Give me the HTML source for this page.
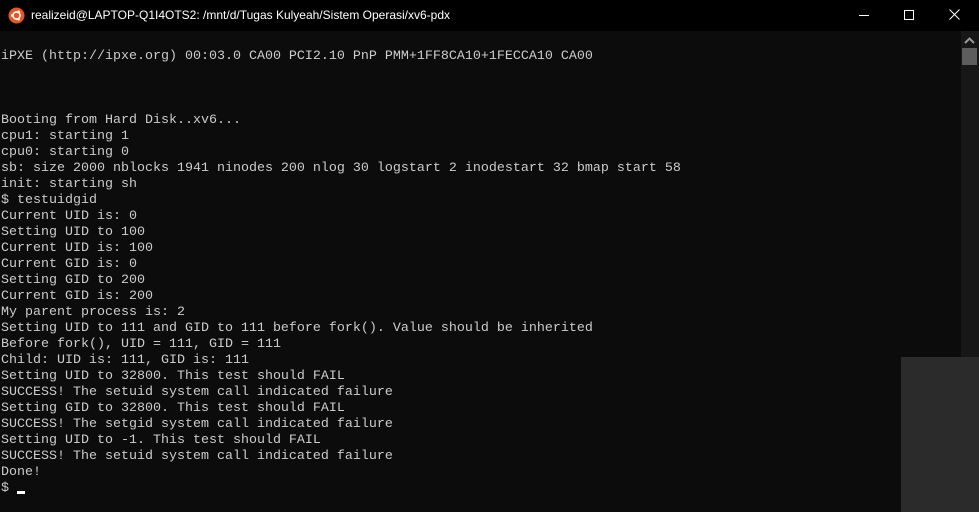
<!DOCTYPE html>
<html><head><style>
body{margin:0;width:979px;height:512px;background:#0c0c0c;overflow:hidden;position:relative}
#tb{position:absolute;left:0;top:0;width:979px;height:31px;background:#000}
#title{position:absolute;left:31px;top:8px;color:#fff;font:12px "Liberation Sans",sans-serif;white-space:nowrap}
#term{position:absolute;left:1px;top:33px;margin:0;color:#cccccc;font:13.33px/16px "Liberation Mono",monospace;white-space:pre}
#sb{position:absolute;left:961px;top:31px;width:18px;height:481px;background:#171717}
#thumb{position:absolute;left:962px;top:48px;width:15px;height:17px;background:#5d5d5d}
#gb{position:absolute;left:901px;top:357px;width:78px;height:155px;background:#2b2b2b}
#cur{position:absolute;left:17px;top:491px;width:8px;height:3px;background:#fff}
</style></head><body>
<div id="tb">
<svg style="position:absolute;left:8px;top:7px" width="17" height="17" viewBox="0 0 17 17"><circle cx="8.5" cy="8.5" r="8" fill="#e95420"/><circle cx="8.5" cy="8.5" r="3.6" fill="none" stroke="#fff" stroke-width="1.6"/><circle cx="4.3" cy="8.5" r="1.4" fill="#fff"/><circle cx="10.6" cy="4.9" r="1.4" fill="#fff"/><circle cx="10.6" cy="12.1" r="1.4" fill="#fff"/></svg>
<div id="title">realizeid@LAPTOP-Q1I4OTS2: /mnt/d/Tugas Kulyeah/Sistem Operasi/xv6-pdx</div>
<div style="position:absolute;left:859px;top:15px;width:10px;height:1px;background:#fff"></div>
<div style="position:absolute;left:904px;top:10px;width:8px;height:8px;border:1px solid #fff"></div>
<svg style="position:absolute;left:949px;top:9px" width="11" height="11"><path d="M0.5 0.5L10.5 10.5M10.5 0.5L0.5 10.5" stroke="#fff" stroke-width="1"/></svg>
</div>
<pre id="term">

iPXE (http://ipxe.org) 00:03.0 CA00 PCI2.10 PnP PMM+1FF8CA10+1FECCA10 CA00



Booting from Hard Disk..xv6...
cpu1: starting 1
cpu0: starting 0
sb: size 2000 nblocks 1941 ninodes 200 nlog 30 logstart 2 inodestart 32 bmap start 58
init: starting sh
$ testuidgid
Current UID is: 0
Setting UID to 100
Current UID is: 100
Current GID is: 0
Setting GID to 200
Current GID is: 200
My parent process is: 2
Setting UID to 111 and GID to 111 before fork(). Value should be inherited
Before fork(), UID = 111, GID = 111
Child: UID is: 111, GID is: 111
Setting UID to 32800. This test should FAIL
SUCCESS! The setuid system call indicated failure
Setting GID to 32800. This test should FAIL
SUCCESS! The setgid system call indicated failure
Setting UID to -1. This test should FAIL
SUCCESS! The setuid system call indicated failure
Done!
$</pre>
<div id="cur"></div>
<div id="sb"></div>
<svg style="position:absolute;left:964px;top:37px" width="11" height="7"><path d="M1 6L5.5 1.5L10 6" stroke="#9a9a9a" stroke-width="2" fill="none"/></svg>
<div id="thumb"></div>
<div id="gb"></div>
</body></html>
